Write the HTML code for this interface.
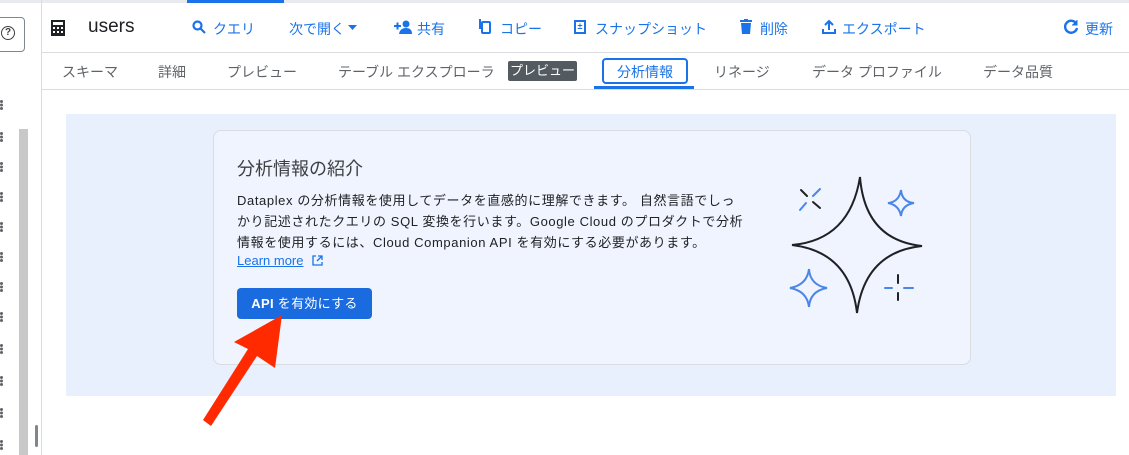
<!DOCTYPE html>
<html><head><meta charset="utf-8"><style>
*{margin:0;padding:0;box-sizing:border-box}
body{width:1129px;height:455px;overflow:hidden;background:#fff;font-family:"Liberation Sans","Noto Sans CJK JP",sans-serif;position:relative;color:#202124}
.a{position:absolute;white-space:nowrap}
.blue{color:#1a73e8}
.tab{position:absolute;top:62px;font-size:14px;color:#5f6368}
</style></head><body>
<div class="a" style="left:0;top:0;width:1129px;height:3px;background:#e8eaed"></div>
<div class="a" style="left:187px;top:0;width:97px;height:3px;background:#1a73e8"></div>
<div class="a" style="left:41px;top:0;width:1px;height:455px;background:#dadce0"></div>
<div class="a" style="left:-6px;top:17px;width:31px;height:35px;border:1px solid #80868b;border-radius:4px"></div>
<div class="a" style="left:1px;top:26px;width:14px;height:14px;border:1.5px solid #3c4043;border-radius:50%;font-size:10px;line-height:11px;text-align:center;font-weight:bold;color:#3c4043">?</div>
<div class="a" style="left:19px;top:129px;width:9px;height:326px;background:#c8c8c8"></div>
<div class="a" style="left:35px;top:425px;width:3px;height:22px;background:#80868b;border-radius:2px"></div>
<svg class="a" style="left:0;top:100px" width="6" height="355">
<defs><g id="d" fill="#5f6368"><circle cx="1.5" cy="1.5" r="1.5"/><circle cx="1.5" cy="5" r="1.5"/><circle cx="1.5" cy="8.5" r="1.5"/></g></defs>
<use href="#d" y="0"/><use href="#d" y="32"/><use href="#d" y="62"/><use href="#d" y="92"/><use href="#d" y="122"/><use href="#d" y="152"/><use href="#d" y="182"/><use href="#d" y="212"/><use href="#d" y="244"/><use href="#d" y="276"/><use href="#d" y="308"/><use href="#d" y="340"/></svg>
<!-- header -->
<svg class="a" style="left:51px;top:20px" width="14" height="16"><rect width="14" height="16" fill="#202124"/><g fill="#fff"><rect x="2" y="2" width="10" height="3"/><rect x="2" y="7" width="2" height="2"/><rect x="6" y="7" width="2" height="2"/><rect x="10" y="7" width="2" height="2"/><rect x="2" y="11" width="2" height="2"/><rect x="6" y="11" width="2" height="2"/><rect x="10" y="11" width="2" height="2"/></g></svg>
<div class="a" style="left:88px;top:16px;font-size:19px">users</div>
<svg class="a" style="left:192px;top:20px" width="14" height="14" fill="none" stroke="#1a73e8" stroke-width="2.2"><circle cx="5.5" cy="5.5" r="4"/><path d="M8.5 8.5L13 13"/></svg>
<div class="a blue" style="left:213px;top:19px;font-size:14px">クエリ</div>
<div class="a blue" style="left:289px;top:19px;font-size:14px">次で開く</div>
<svg class="a" style="left:348px;top:25px" width="9" height="5"><path d="M0 0H9L4.5 5Z" fill="#1a73e8"/></svg>
<svg class="a" style="left:394px;top:20px" width="18" height="14" fill="#1a73e8"><rect x="0" y="5" width="7" height="2"/><rect x="2.5" y="2.5" width="2" height="7"/><circle cx="12" cy="4" r="3.5"/><path d="M5 14Q6 8 12 8Q18 8 18 14Z"/></svg>
<div class="a blue" style="left:417px;top:19px;font-size:14px">共有</div>
<div class="a" style="left:481px;top:21px;width:10px;height:13px;border:2px solid #1a73e8;border-radius:2px"></div>
<div class="a" style="left:479px;top:19px;width:2px;height:10px;background:#1a73e8"></div>
<div class="a blue" style="left:500px;top:19px;font-size:14px">コピー</div>
<div class="a" style="left:574px;top:20px;width:12px;height:14px;border:2px solid #1a73e8;font-size:9px;line-height:9px;text-align:center;color:#1a73e8;font-weight:bold">±</div>
<div class="a blue" style="left:595px;top:19px;font-size:14px">スナップショット</div>
<svg class="a" style="left:740px;top:19px" width="12" height="15" fill="#1a73e8"><rect x="0" y="1" width="12" height="2"/><rect x="4" y="0" width="4" height="2"/><path d="M1 4H11L10 15H2Z"/></svg>
<div class="a blue" style="left:760px;top:19px;font-size:14px">削除</div>
<svg class="a" style="left:822px;top:19px" width="14" height="15" fill="none" stroke="#1a73e8" stroke-width="2"><path d="M7 11V2M3 6L7 2L11 6M1 10V14H13V10"/></svg>
<div class="a blue" style="left:842px;top:19px;font-size:14px">エクスポート</div>
<svg class="a" style="left:1064px;top:19px" width="15" height="15" fill="none" stroke="#1a73e8" stroke-width="2.4"><path d="M12.5 5A6 6 0 1 0 13 9"/><path d="M13 1V6H8" fill="#1a73e8" stroke-width="1"/></svg>
<div class="a blue" style="left:1085px;top:19px;font-size:14px">更新</div>
<div class="a" style="left:42px;top:52px;width:1087px;height:1px;background:#dadce0"></div>
<!-- tabs -->
<div class="tab" style="left:62px">スキーマ</div>
<div class="tab" style="left:158px">詳細</div>
<div class="tab" style="left:227px">プレビュー</div>
<div class="tab" style="left:338px">テーブル エクスプローラ</div>
<div class="a" style="left:508px;top:61px;width:69px;height:20px;background:#535a60;border-radius:2px;color:#fff;font-size:13px;text-align:center;line-height:20px">プレビュー</div>
<div class="a" style="left:602px;top:58px;width:86px;height:26px;border:2px solid #1a73e8;border-radius:4px"></div>
<div class="tab" style="left:617px;color:#1a73e8">分析情報</div>
<div class="a" style="left:594px;top:86px;width:100px;height:3px;background:#1a73e8"></div>
<div class="tab" style="left:714px">リネージ</div>
<div class="tab" style="left:812px">データ プロファイル</div>
<div class="tab" style="left:983px">データ品質</div>
<div class="a" style="left:42px;top:89px;width:1087px;height:1px;background:#dadce0"></div>
<!-- panel -->
<div class="a" style="left:66px;top:114px;width:1050px;height:282px;background:#e8f0fe"></div>
<div class="a" style="left:213px;top:130px;width:758px;height:235px;background:#eff4fe;border:1px solid #dadce0;border-radius:8px"></div>
<div class="a" style="left:237px;top:155px;font-size:18px;color:#3c4043">分析情報の紹介</div>
<div class="a" style="left:237px;top:190px;font-size:13px;line-height:21px;color:#202124;letter-spacing:0.6px">Dataplex の分析情報を使用してデータを直感的に理解できます。 自然言語でしっ<br>かり記述されたクエリの SQL 変換を行います。Google Cloud のプロダクトで分析<br>情報を使用するには、Cloud Companion API を有効にする必要があります。</div>
<div class="a blue" style="left:237px;top:253px;font-size:13px;text-decoration:underline;color:#1a73e8">Learn more</div>
<svg class="a" style="left:312px;top:255px" width="11" height="11" fill="none" stroke="#1a73e8" stroke-width="1.3"><path d="M4 1H1V10H10V7M6 1H10V5M10 1L5 6"/></svg>
<div class="a" style="left:237px;top:288px;width:135px;height:31px;background:#1a6ae0;border-radius:4px;color:#fff;font-size:13px;text-align:center;line-height:31px;letter-spacing:0.3px"><b>API</b> を有効にする</div>
<svg class="a" style="left:770px;top:160px" width="170" height="170" fill="none" stroke-width="2" stroke-linecap="round">
<path d="M90 17 Q95 80 152 86 Q95 92 87 153 Q80 92 22 85 Q80 80 90 17Z" stroke="#202124"/>
<path d="M131 30 Q132 42 144 43 Q132 45 131 56 Q129 45 118 43 Q129 42 131 30Z" stroke="#4a86e8"/>
<path d="M39 109 Q40 125 57 128 Q40 131 39 147 Q37 131 20 128 Q37 125 39 109Z" stroke="#4a86e8"/>
<path d="M31 30 L37 36 M43 42 L50 48" stroke="#202124"/>
<path d="M50 29 L43 36 M36 43 L30 50" stroke="#4a86e8"/>
<path d="M128 115 L128 123 M128 133 L128 140" stroke="#202124"/>
<path d="M115 128 L122 128 M134 128 L143 128" stroke="#4a86e8"/>
</svg>
<svg class="a" style="left:0;top:0" width="1129" height="455"><polygon points="282,315 234,342 248,349 203,420 211,426 257,356 275,368" fill="#ff2a00"/></svg>
</body></html>
